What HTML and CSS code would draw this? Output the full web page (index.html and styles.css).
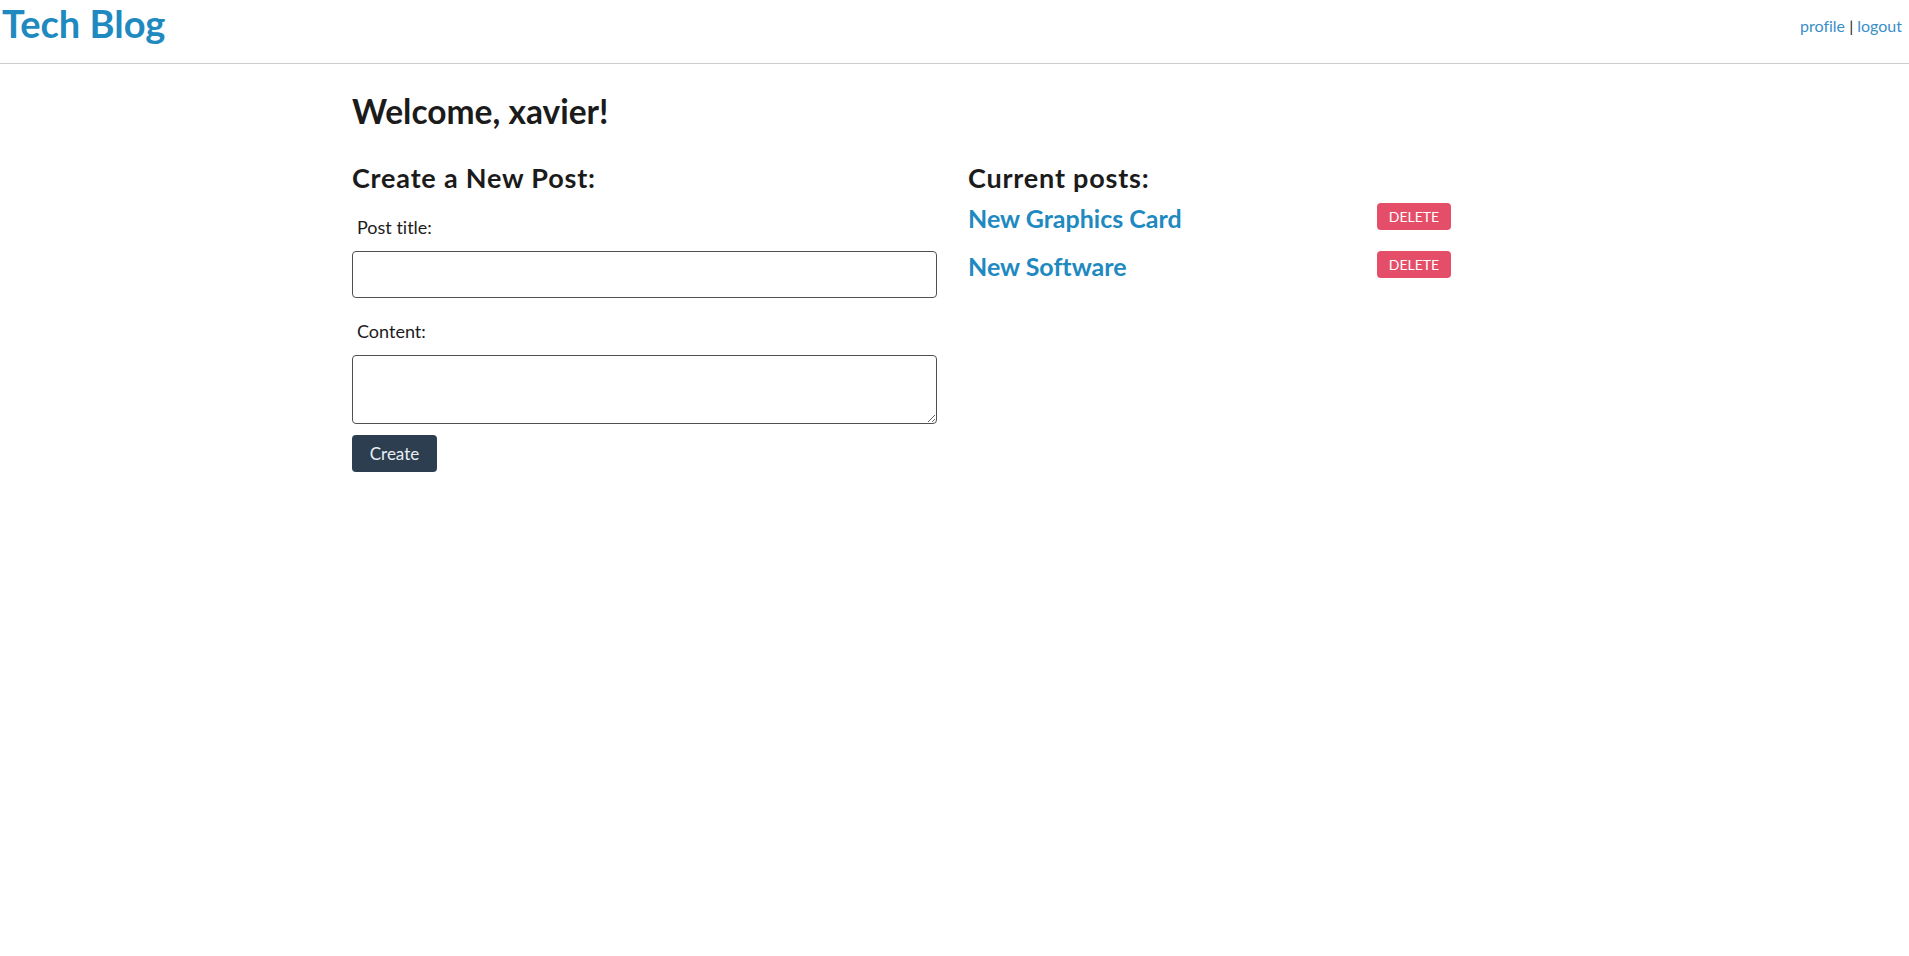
FILE: index.html
```html
<!DOCTYPE html>
<html lang="en">
<head>
<meta charset="utf-8">
<title>Tech Blog</title>
<link rel="stylesheet" href="styles.css">
</head>
<body>
<header class="site-header">
  <a class="brand" href="#">Tech Blog</a>
  <nav class="nav-links"><a href="#">profile</a> | <a href="#">logout</a></nav>
</header>
<main class="dashboard">
  <h1 class="welcome">Welcome, xavier!</h1>
  <div class="columns">
    <section class="create-col">
      <h2 class="col-title">Create a New Post:</h2>
      <form class="post-form">
        <label class="field-label" for="title">Post title:</label>
        <input class="field-input" id="title" type="text">
        <label class="field-label" for="content">Content:</label>
        <textarea class="field-area" id="content"></textarea>
        <button class="btn-create" type="button">Create</button>
      </form>
    </section>
    <section class="posts-col">
      <h2 class="col-title">Current posts:</h2>
      <ul class="post-list">
        <li class="post-row"><a class="post-link" href="#">New Graphics Card</a><button class="btn-delete" type="button">DELETE</button></li>
        <li class="post-row"><a class="post-link" href="#">New Software</a><button class="btn-delete" type="button">DELETE</button></li>
      </ul>
    </section>
  </div>
</main>
</body>
</html>
```

FILE: styles.css
```css
* { box-sizing: border-box; }
body {
  margin: 0;
  font-family: Lato, "Open Sans", sans-serif;
  font-variant-ligatures: none;
  color: #1b1b1b;
  background: #fff;
}
a { text-decoration: none; color: #2089c0; }

.site-header {
  display: flex;
  justify-content: space-between;
  align-items: flex-start;
  height: 64px;
  border-bottom: 1px solid #cccccc;
  padding: 0 7px 0 2px;
}
.brand {
  font-size: 38px;
  line-height: 46px;
  font-weight: 700;
  color: #2089c0;
}
.nav-links {
  padding-top: 16px;
  font-size: 16px;
  line-height: 20px;
  color: #222;
}
.nav-links a { color: #3b8fc8; }

.dashboard {
  width: 1205px;
  margin: 0 auto;
}
.welcome {
  margin: 27px 0 0;
  font-size: 33.5px;
  line-height: 40px;
  font-weight: 700;
}
.columns {
  display: grid;
  grid-template-columns: 585px 483px;
  column-gap: 31px;
  margin-top: 31px;
}
.col-title {
  margin: 0;
  font-size: 27px;
  line-height: 32px;
  font-weight: 700;
  letter-spacing: 0.8px;
}
.post-form {
  display: flex;
  flex-direction: column;
  align-items: flex-start;
}
.field-label {
  margin-top: 21.5px;
  padding-left: 5px;
  font-size: 18px;
  line-height: 22px;
}
.field-input {
  width: 100%;
  height: 47px;
  margin-top: 13.5px;
  border: 1px solid #505050;
  border-radius: 4px;
  font: inherit;
}
.field-area {
  width: 100%;
  height: 69px;
  margin-top: 13.5px;
  border: 1px solid #505050;
  border-radius: 4px;
  font: inherit;
}
.btn-create {
  margin-top: 10.5px;
  width: 85px;
  height: 37px;
  border: none;
  border-radius: 4px;
  background: #2c3e50;
  color: #e9eff4;
  font-family: inherit;
  font-size: 17px;
  padding: 0;
}

.post-list {
  list-style: none;
  margin: 9px 0 0;
  padding: 0;
  display: flex;
  flex-direction: column;
  gap: 18px;
}
.post-row {
  display: flex;
  justify-content: space-between;
  align-items: flex-start;
  height: 30px;
}
.post-link {
  font-size: 25px;
  line-height: 30px;
  font-weight: 700;
  color: #2089c0;
}
.btn-delete {
  width: 74px;
  height: 27px;
  border: none;
  border-radius: 4px;
  background: #e54e69;
  color: #fff;
  font-family: inherit;
  font-size: 14px;
  padding: 0;
}
```
